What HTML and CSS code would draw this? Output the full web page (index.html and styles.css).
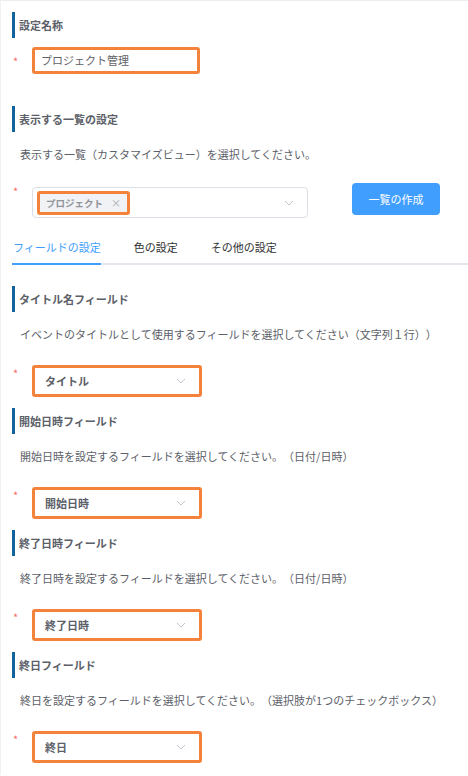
FILE: index.html
```html
<!DOCTYPE html>
<html lang="ja">
<head>
<meta charset="utf-8">
<title>設定</title>
<link rel="stylesheet" href="styles.css">
</head>
<body>
<div class="page">
  <section class="block">
    <h2 class="sec-title">設定名称</h2>
    <div class="row row-name">
      <span class="req">*</span>
      <div class="hl input-box">プロジェクト管理</div>
    </div>
  </section>

  <section class="block block-view">
    <h2 class="sec-title">表示する一覧の設定</h2>
    <p class="desc">表示する一覧（カスタマイズビュー）を選択してください。</p>
    <div class="row row-view">
      <span class="req">*</span>
      <div class="multi">
        <span class="tag">プロジェクト<span class="tag-x">×</span></span>
        <svg class="chev chev-multi" width="10" height="6" viewBox="0 0 10 6"><path d="M1 1 L5 5 L9 1" fill="none" stroke="#c0c4cc" stroke-width="1"/></svg>
      </div>
      <button class="btn">一覧の作成</button>
    </div>
  </section>

  <nav class="tabs">
    <span class="tab active">フィールドの設定</span>
    <span class="tab">色の設定</span>
    <span class="tab">その他の設定</span>
  </nav>

  <section class="field field-first">
    <h2 class="sec-title">タイトル名フィールド</h2>
    <p class="desc">イベントのタイトルとして使用するフィールドを選択してください（文字列１行））</p>
    <div class="row">
      <span class="req">*</span>
      <div class="hl select-box"><span>タイトル</span><svg class="chev" width="10" height="6" viewBox="0 0 10 6"><path d="M1 1 L5 5 L9 1" fill="none" stroke="#c0c4cc" stroke-width="1"/></svg></div>
    </div>
  </section>

  <section class="field">
    <h2 class="sec-title">開始日時フィールド</h2>
    <p class="desc">開始日時を設定するフィールドを選択してください。（日付/日時）</p>
    <div class="row">
      <span class="req">*</span>
      <div class="hl select-box"><span>開始日時</span><svg class="chev" width="10" height="6" viewBox="0 0 10 6"><path d="M1 1 L5 5 L9 1" fill="none" stroke="#c0c4cc" stroke-width="1"/></svg></div>
    </div>
  </section>

  <section class="field">
    <h2 class="sec-title">終了日時フィールド</h2>
    <p class="desc">終了日時を設定するフィールドを選択してください。（日付/日時）</p>
    <div class="row">
      <span class="req">*</span>
      <div class="hl select-box"><span>終了日時</span><svg class="chev" width="10" height="6" viewBox="0 0 10 6"><path d="M1 1 L5 5 L9 1" fill="none" stroke="#c0c4cc" stroke-width="1"/></svg></div>
    </div>
  </section>

  <section class="field">
    <h2 class="sec-title">終日フィールド</h2>
    <p class="desc">終日を設定するフィールドを選択してください。（選択肢が1つのチェックボックス）</p>
    <div class="row">
      <span class="req">*</span>
      <div class="hl select-box"><span>終日</span><svg class="chev" width="10" height="6" viewBox="0 0 10 6"><path d="M1 1 L5 5 L9 1" fill="none" stroke="#c0c4cc" stroke-width="1"/></svg></div>
    </div>
  </section>
</div>
</body>
</html>
```

FILE: styles.css
```css
html, body {
  margin: 0;
  padding: 0;
  background: #ffffff;
}

body {
  font-family: "Noto Sans CJK JP", "Noto Sans", sans-serif;
  font-size: 11px;
  color: #606266;
  text-spacing-trim: space-all;
}

.page {
  border-top: 1px solid #ebedf0;
  border-left: 1px solid #f0f1f3;
  min-height: 775px;
  padding: 11px 0 0 11px;
  box-sizing: border-box;
}

.sec-title {
  margin: 0;
  height: 26px;
  line-height: 26px;
  border-left: 3px solid #12629c;
  padding-left: 4px;
  font-size: 11px;
  font-weight: bold;
  color: #5c6068;
}

.desc {
  margin: 14px 0 0 0;
  padding-left: 8px;
  line-height: 16px;
  color: #5c6068;
}

.row {
  display: flex;
  align-items: flex-start;
}

.req {
  width: 20px;
  padding-left: 1px;
  box-sizing: border-box;
  color: #f56c6c;
  line-height: 16px;
  flex-shrink: 0;
}

.row-name {
  margin-top: 9px;
  align-items: center;
}

.row-name .req {
  margin-top: 1px;
}

.hl {
  border: 3px solid #f5823a;
  border-radius: 3px;
  box-sizing: border-box;
  background: #ffffff;
}

.input-box {
  width: 168px;
  height: 27px;
  line-height: 21px;
  padding-left: 6px;
  color: #606266;
}

.block-view {
  margin-top: 32px;
}

.row-view {
  margin-top: 21px;
}

.multi {
  margin-top: 4px;
  width: 276px;
  height: 31px;
  border: 1px solid #dcdfe6;
  border-radius: 4px;
  box-sizing: border-box;
  display: flex;
  align-items: center;
  justify-content: space-between;
  padding: 0 13px 0 4px;
}

.tag {
  display: flex;
  align-items: center;
  height: 24px;
  box-sizing: border-box;
  border: 3px solid #f5823a;
  border-radius: 3px;
  background: #f0f2f5;
  padding: 0 6px 0 6px;
  font-size: 9.5px;
  font-weight: bold;
  color: #909399;
}

.tag-x {
  margin-left: 8px;
  font-weight: normal;
  font-size: 10px;
  color: #a8abb2;
}

.chev {
  display: block;
  flex-shrink: 0;
}

.btn {
  margin-left: 44px;
  width: 88px;
  height: 32px;
  border: none;
  border-radius: 4px;
  background: #409eff;
  color: #ffffff;
  font-family: inherit;
  font-size: 11px;
  padding: 0;
}

.tabs {
  margin-top: 13px;
  display: flex;
  gap: 33px;
  border-bottom: 2px solid #e4e7ed;
}

.tab {
  padding: 8px 0 8px 0;
  line-height: 16px;
  color: #303133;
}

.tab.active {
  color: #409eff;
  border-bottom: 2px solid #409eff;
  margin-bottom: -2px;
  padding-left: 1px;
}

.field {
  margin-top: 11px;
}

.field-first {
  margin-top: 21px;
}

.field .row {
  margin-top: 23px;
}

.select-box {
  width: 170px;
  height: 32px;
  display: flex;
  align-items: center;
  justify-content: space-between;
  padding: 0 13px 0 10px;
  font-weight: bold;
  color: #5c6068;
}
```
